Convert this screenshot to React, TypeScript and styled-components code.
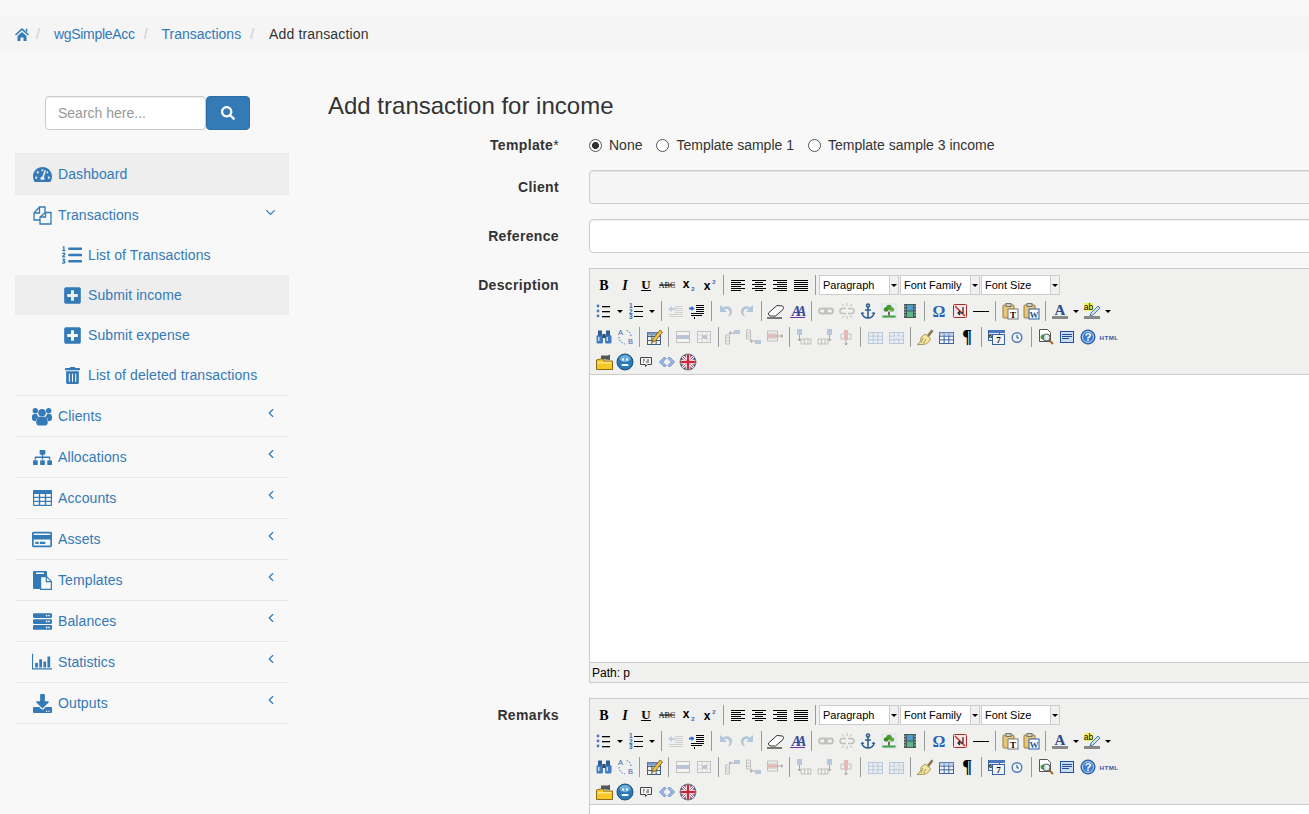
import React from "react";
import styled, { createGlobalStyle } from "styled-components";
import { FaSearch, FaTachometerAlt, FaListOl, FaPlusSquare, FaTrashAlt, FaSitemap, FaRegCreditCard, FaServer, FaDownload } from "react-icons/fa";
import { ChevronLeft, ChevronDown } from "lucide-react";

const Global = createGlobalStyle`
  html, body { margin: 0; height: 100%; overflow: hidden; background: #f8f8f8; }
  body { font-family: "Liberation Sans", Arial, sans-serif; font-size: 14px; line-height: 20px; color: #333; }
  * { box-sizing: border-box; }
`;

const Page = styled.div`
  width: 1309px;
  height: 814px;
  overflow: hidden;
  padding-top: 16px;
`;
const Crumbs = styled.nav`
  display: flex;
  align-items: center;
  height: 36px;
  padding: 0 15px;
  background: #f5f5f5;
`;
const Crumb = styled.span`
  color: #337ab7;
  display: inline-flex;
  align-items: center;
`;
const AppCrumb = styled(Crumb)`
  letter-spacing: -0.3px;
`;
const CrumbCurrent = styled.span`
  color: #333;
  letter-spacing: 0.15px;
  margin-left: 1px;
`;
const CrumbSep = styled.span`
  color: #ccc;
  padding: 0 14px 0 9px;
`;
const HomeSep = styled(CrumbSep)`
  padding-left: 7px;
`;
const Columns = styled.div`
  display: flex;
  align-items: flex-start;
`;
const Side = styled.aside`
  flex: none;
  width: 274px;
  margin: 44px 39px 0 15px;
`;
const SearchBar = styled.form`
  display: flex;
  margin: 0 0 23px 30px;
  height: 34px;
`;
const SearchInput = styled.input`
  width: 161px;
  height: 34px;
  padding: 6px 12px;
  border: 1px solid #ccc;
  border-radius: 4px;
  background: #fff;
  font: 14px "Liberation Sans", Arial, sans-serif;
  color: #555;
  box-shadow: inset 0 1px 1px rgba(0, 0, 0, 0.075);
  &::placeholder { color: #999; opacity: 1; }
`;
const SearchButton = styled.button`
  width: 44px;
  height: 34px;
  padding: 0;
  border: 1px solid #2e6da4;
  border-radius: 4px;
  background: #337ab7;
  color: #fff;
  font-size: 14px;
  display: flex;
  align-items: center;
  justify-content: center;
`;
const Menu = styled.ul`
  list-style: none;
  margin: 0;
  padding: 0;
  border-top: 1px solid #e7e7e7;
`;
const MenuItem = styled.li`
  border-bottom: 1px solid #e7e7e7;
`;
const MenuLink = styled.a<{ $active?: boolean; $sub?: boolean }>`
  display: flex;
  align-items: center;
  height: 40px;
  padding-left: ${(p) => (p.$sub ? "47px" : "17px")};
  padding-right: 11px;
  color: #337ab7;
  letter-spacing: 0.1px;
  background: ${(p) => (p.$active ? "#eee" : "transparent")};
`;
const MenuIcon = styled.span`
  flex: none;
  width: 20px;
  margin-right: 6px;
  display: flex;
  justify-content: center;
  align-items: center;
  font-size: 19px;
`;
const Caret = styled.span`
  margin-left: auto;
  display: flex;
  transform: translateY(-3px);
`;

const Main = styled.main`
  flex: none;
  width: 1200px;
  padding-top: 41px;
`;
const Title = styled.h3`
  margin: 0 0 15.6px;
  font-size: 24px;
  font-weight: 500;
  line-height: 26.4px;
  color: #333;
`;
const FormRow = styled.div`
  display: grid;
  grid-template-columns: 231px 1fr;
  column-gap: 30px;
  margin-bottom: 15px;
`;
const Label = styled.label<{ $flat?: boolean }>`
  text-align: right;
  font-weight: 700;
  letter-spacing: 0.35px;
  padding-top: ${(p) => (p.$flat ? "0" : "7px")};
`;
const Star = styled.span`
  font-weight: 400;
`;
const RadioGroup = styled.div`
  display: flex;
  height: 20px;
  align-items: center;
`;
const RadioLabel = styled.label`
  display: inline-flex;
  align-items: center;
  margin-right: 14px;
`;
const Radio = styled.input`
  appearance: none;
  width: 13px;
  height: 13px;
  margin: 0 7px 0 0;
  border: 1px solid #555;
  border-radius: 50%;
  background: #fff;
  &:checked { background: radial-gradient(circle, #333 0 3.2px, #fff 3.8px); }
`;
const TextInput = styled.input`
  width: 100%;
  height: 34px;
  padding: 6px 12px;
  border: 1px solid #ccc;
  border-radius: 4px;
  background: ${(p) => (p.disabled ? "#f5f5f5" : "#fff")};
  box-shadow: inset 0 1px 1px rgba(0, 0, 0, 0.075);
`;
const Editor = styled.div`
  border: 1px solid #ccc;
  background: #f0f0ee;
  font-family: "Liberation Sans", Arial, sans-serif;
`;
const Toolbar = styled.div`
  height: 106px;
  padding: 3px 0 0 3px;
  border-bottom: 1px solid #ccc;
`;
const ToolRow = styled.div`
  display: flex;
  align-items: center;
  height: 26px;
  &:last-child { height: 24px; }
`;
const Tool = styled.span<{ $off?: boolean }>`
  flex: none;
  width: 21px;
  height: 20px;
  display: flex;
  align-items: center;
  justify-content: center;
  opacity: ${(p) => (p.$off ? 0.3 : 1)};
`;
const Arrow = styled.span`
  flex: none;
  width: 11px;
  height: 20px;
  display: flex;
  align-items: center;
  justify-content: center;
  &::after {
    content: "";
    border-left: 3px solid transparent;
    border-right: 3px solid transparent;
    border-top: 3px solid #000;
  }
`;
const Sep = styled.span`
  flex: none;
  width: 8px;
  height: 20px;
  display: flex;
  justify-content: center;
  &::after { content: ""; width: 1px; background: #999; }
`;
const ListBox = styled.span<{ $w: number }>`
  flex: none;
  display: flex;
  width: ${(p) => p.$w}px;
  height: 20px;
  margin-right: 1px;
`;
const ListText = styled.span`
  flex: 1;
  background: #fff;
  border: 1px solid #ccc;
  border-right: 0;
  padding-left: 3px;
  font-size: 11px;
  line-height: 19px;
  color: #000;
  overflow: hidden;
  white-space: nowrap;
`;
const ListOpen = styled(Arrow)`
  width: 10px;
  background: #f0f0ee;
  border: 1px solid #ccc;
`;
const EditArea = styled.div`
  height: 288px;
  background: #fff;
  border-bottom: 1px solid #ccc;
`;
const StatusBar = styled.div`
  height: 19px;
  padding-left: 2px;
  font-size: 12px;
  line-height: 20px;
  color: #000;
`;

const lines = (rows: [number, number][], y0: number, color = "#000", step = 2) =>
  rows.map(([a, b], i) => <rect key={i} x={a} y={y0 + i * step} width={b - a} height={1} fill={color} />);

const serif = "Liberation Serif, serif";
const sans = "Liberation Sans, sans-serif";

const disc = (cx: number, cy: number, fill = "#4a78c0") => <circle cx={cx} cy={cy} r={1.4} fill={fill} />;
const grid = (x: number, y: number, w: number, h: number, c = "#4f7cb5", fill = "#e6eef8") => (
  <>
    <rect x={x + 0.5} y={y + 0.5} width={w} height={h} fill={fill} stroke={c} />
    <path d={`M${x} ${y + h / 3 + 0.5}h${w}M${x} ${y + (2 * h) / 3 + 0.5}h${w}M${x + w / 3 + 0.5} ${y}v${h}M${x + (2 * w) / 3 + 0.5} ${y}v${h}`} stroke={c} />
  </>
);

const icons: Record<string, React.ReactNode> = {
  bold: <text x="10" y="14.5" textAnchor="middle" fontFamily={serif} fontWeight="700" fontSize="14">B</text>,
  italic: <text x="10" y="14.5" textAnchor="middle" fontFamily={serif} fontWeight="700" fontStyle="italic" fontSize="14">I</text>,
  underline: (
    <>
      <text x="10" y="13.5" textAnchor="middle" fontFamily={serif} fontWeight="700" fontSize="13">U</text>
      <rect x="5" y="15" width="10" height="1" />
    </>
  ),
  strike: (
    <>
      <text x="10" y="13" textAnchor="middle" fontFamily={serif} fontSize="8">ABC</text>
      <rect x="2" y="9.5" width="16" height="1" />
    </>
  ),
  sub: (
    <>
      <text x="8" y="13" textAnchor="middle" fontFamily={sans} fontWeight="700" fontSize="12">x</text>
      <text x="15" y="16" textAnchor="middle" fontFamily={sans} fontWeight="700" fontSize="6" fill="#3a66b0">2</text>
    </>
  ),
  sup: (
    <>
      <text x="8" y="15" textAnchor="middle" fontFamily={sans} fontWeight="700" fontSize="12">x</text>
      <text x="15" y="9" textAnchor="middle" fontFamily={sans} fontWeight="700" fontSize="6" fill="#3a66b0">2</text>
    </>
  ),
  alLeft: lines([[3, 17], [3, 13], [3, 17], [3, 13], [3, 17], [3, 13]], 5),
  alCenter: lines([[3, 17], [6, 14], [3, 17], [6, 14], [3, 17], [6, 14]], 5),
  alRight: lines([[3, 17], [7, 17], [3, 17], [7, 17], [3, 17], [7, 17]], 5),
  alFull: lines([[3, 17], [3, 17], [3, 17], [3, 17], [3, 17], [3, 17]], 5),
  bullets: (
    <>
      {disc(4, 5)}{disc(4, 10)}{disc(4, 15)}
      {lines([[8, 16], [8, 16], [8, 16]], 5, "#000", 5)}
      {lines([[8, 16], [8, 16], [8, 16]], 6, "#aaa", 5)}
    </>
  ),
  numbers: (
    <>
      <text x="3" y="7" fontFamily={sans} fontWeight="700" fontSize="6.5" fill="#3a66b0">1</text>
      <text x="3" y="12.5" fontFamily={sans} fontWeight="700" fontSize="6.5" fill="#3a66b0">2</text>
      <text x="3" y="18" fontFamily={sans} fontWeight="700" fontSize="6.5" fill="#3a66b0">3</text>
      {lines([[8, 17], [8, 17], [8, 17]], 5, "#000", 5)}
    </>
  ),
  outdent: (
    <>
      {lines([[9, 17], [9, 17], [9, 17], [9, 17]], 5, "#888", 2)}
      {lines([[3, 17], [3, 17]], 13, "#888", 2)}
      <path d="M2 8l4-3v2h3v2H6v2z" fill="#4a8ad0" />
    </>
  ),
  indent: (
    <>
      {lines([[9, 17], [9, 17], [9, 17], [9, 17]], 4, "#000", 2)}
      {lines([[4, 17], [4, 15]], 12, "#000", 2)}
      <rect x="7" y="16" width="1" height="2" fill="#000" />
      <path d="M7.500 7.500L4.500 5v1.500H2v2h2.500V10z" fill="#2a6ad0" />
    </>
  ),
  undo: <path d="M4 4v7h7l-2.5-2.5C10 7 13 8 13.5 11c.3 2-.5 3.5-2 4.500 3.500-.5 5-3.500 4.500-6C15.300 5.800 11 3.800 7 6.500z" fill="#2a6ab0" />,
  redo: <path d="M16 4v7H9l2.500-2.500C10 7 7 8 6.500 11c-.3 2 .5 3.500 2 4.500-3.500-.5-5-3.500-4.500-6C4.700 5.800 9 3.800 13 6.500z" fill="#2a6ab0" />,
  eraser: (
    <>
      <path d="M2.500 12L11 4.500l5.500.5c1.200 1 1.200 2.500.5 3.500L9.500 15H5.500c-2.500 0-3.500-1.500-3-3z" fill="#fff" stroke="#333" />
      <path d="M1 17h15" stroke="#000" />
    </>
  ),
  removeFormat: (
    <>
      <text x="10" y="15" textAnchor="middle" fontFamily={serif} fontWeight="700" fontStyle="italic" fontSize="14" letterSpacing="-4" fill="#3a4a98">AA</text>
      <rect x="3" y="16" width="15" height="1" fill="#7030a0" />
    </>
  ),
  link: (
    <g fill="none" stroke="#555" strokeWidth="1.800">
      <rect x="3" y="7.500" width="8" height="5" rx="2.500" />
      <rect x="9" y="7.500" width="8" height="5" rx="2.500" />
    </g>
  ),
  unlink: (
    <g fill="none" stroke="#555" strokeWidth="1.500">
      <path d="M9 7.500H5.500a2.500 2.500 0 000 5H9M11 7.500h3.500a2.500 2.500 0 010 5H11" />
      <path d="M10 2v3M10 15v3M5 3l2 2.500M15 3l-2 2.500M5 17l2-2.500M15 17l-2-2.500" strokeWidth="1" />
    </g>
  ),
  anchor: (
    <g fill="none" stroke="#2f5f90" strokeWidth="1.600">
      <circle cx="10" cy="4.500" r="1.500" />
      <path d="M10 6v11M7 9h6M4 12c0 3 3 5 6 5s6-2 6-5" />
      <path d="M3 13l1.500-2 1.500 2M14 13l1.500-2 1.500 2" strokeWidth="1" />
    </g>
  ),
  image: (
    <>
      <rect x="3" y="3" width="14" height="14" fill="#e8f4fc" stroke="#ddd" />
      <rect x="3.500" y="14.500" width="13" height="2" fill="#3aa03a" />
      <rect x="9.200" y="10.500" width="1.600" height="4" fill="#704020" />
      <circle cx="10" cy="6.500" r="2.800" fill="#4f9a30" />
      <circle cx="7" cy="8.500" r="2.300" fill="#3f8a2a" />
      <circle cx="13" cy="8.500" r="2.300" fill="#6aa838" />
    </>
  ),
  media: (
    <>
      <rect x="4" y="3" width="12" height="14" fill="#4a5a58" />
      <rect x="7" y="4" width="6" height="5.500" fill="#4aa0c8" />
      <rect x="7" y="10.500" width="6" height="5.500" fill="#58b888" />
      <path d="M5 4.500v11M15 4.500v11" stroke="#cfcfcf" strokeDasharray="1.500 1.500" />
    </>
  ),
  omega: <text x="10" y="15.500" textAnchor="middle" fontFamily={serif} fontWeight="700" fontSize="16" fill="#2a62b0">Ω</text>,
  nonbreak: (
    <>
      <rect x="3.500" y="3.500" width="13" height="13" rx="1" fill="#f8e8e8" stroke="#b02828" />
      <path d="M5 5l10 10" stroke="#c83030" strokeWidth="1.500" />
      <path d="M13 6v6H8M10 10l-2 2 2 2" fill="none" stroke="#222" strokeWidth="1.200" />
    </>
  ),
  hr: <rect x="2" y="10" width="16" height="1" fill="#000" />,
  pasteText: (
    <>
      <rect x="3" y="4" width="11" height="13" rx="1" fill="#e6c878" stroke="#9a7a38" />
      <rect x="6" y="2.500" width="5" height="3" fill="#ccc" stroke="#777" />
      <rect x="8" y="8" width="10" height="10" fill="#fff" stroke="#777" />
      <text x="13" y="16.500" textAnchor="middle" fontFamily={serif} fontWeight="700" fontSize="9">T</text>
    </>
  ),
  pasteWord: (
    <>
      <rect x="3" y="4" width="11" height="13" rx="1" fill="#e6c878" stroke="#9a7a38" />
      <rect x="6" y="2.500" width="5" height="3" fill="#ccc" stroke="#777" />
      <rect x="8" y="8" width="10" height="10" fill="#fff" stroke="#2a5aa0" />
      <text x="13" y="16.500" textAnchor="middle" fontFamily={serif} fontWeight="700" fontSize="9" fill="#2a5aa0">W</text>
    </>
  ),
  fore: (
    <>
      <text x="10" y="14" textAnchor="middle" fontFamily={serif} fontWeight="700" fontSize="15" fill="#2a4a88">A</text>
      <rect x="2" y="15" width="16" height="3" fill="#888" />
    </>
  ),
  back: (
    <>
      <rect x="2" y="2" width="9" height="8" fill="#f4f060" />
      <text x="6.500" y="9" textAnchor="middle" fontFamily={sans} fontSize="8.500">ab</text>
      <path d="M9 12l7-7 2 2-7 7-3 1z" fill="#cfe0f0" stroke="#4a78a8" />
      <rect x="2" y="15" width="16" height="3" fill="#888" />
    </>
  ),
  search: (
    <>
      <rect x="2.500" y="8" width="6.500" height="8.500" rx="1.500" fill="#3f7cc0" />
      <rect x="11" y="8" width="6.500" height="8.500" rx="1.500" fill="#3f7cc0" />
      <rect x="4" y="3.500" width="4" height="5" fill="#2f5f90" />
      <rect x="12" y="3.500" width="4" height="5" fill="#2f5f90" />
      <rect x="8.500" y="7" width="3" height="4" fill="#264a70" />
      <rect x="4" y="10" width="1.500" height="4" fill="#c4dcf0" />
      <rect x="12.500" y="10" width="1.500" height="4" fill="#c4dcf0" />
    </>
  ),
  replace: (
    <>
      <text x="3" y="8" fontFamily={sans} fontSize="7.500" fill="#3a66b0">A</text>
      <text x="13" y="17" fontFamily={sans} fontSize="7.500" fill="#3a66b0">B</text>
      <path d="M4 10c0 3 2 6 6 7M16 9c0-3-2-5-6-6" fill="none" stroke="#3a7ad0" strokeDasharray="1.500 1.500" />
    </>
  ),
  tableEdit: (
    <>
      {grid(3, 5, 13, 12, "#3f5f88", "#f4f0e0")}
      <rect x="3.500" y="5.500" width="13" height="3" fill="#7a9cc8" />
      <path d="M9 12l7-9 2.500 2-7 9-3 1z" fill="#f0c040" stroke="#805020" strokeWidth=".8" />
    </>
  ),
  rowProps: (
    <>
      <rect x="3.500" y="4.500" width="13" height="11" fill="#fff" stroke="#555" />
      <rect x="4" y="8" width="12" height="4" fill="#3a66a0" />
    </>
  ),
  cellProps: (
    <>
      <rect x="3.500" y="4.500" width="13" height="11" fill="#fff" stroke="#555" />
      <rect x="8" y="8" width="5" height="4" fill="#3a66a0" />
      <path d="M4 8h12M4 12h12M8 5v10M13 5v10" stroke="#999" />
    </>
  ),
  rowBefore: (
    <>
      <path d="M2.500 8h4v9h-4zM2.500 11h4M2.500 14h4" fill="none" stroke="#555" />
      <rect x="11" y="3" width="6" height="4" fill="#3a6ab0" />
      <path d="M6 6h5M6 6l2-1.500M6 6l2 1.500" stroke="#000" fill="none" />
    </>
  ),
  rowAfter: (
    <>
      <path d="M2.500 3h4v9h-4zM2.500 6h4M2.500 9h4" fill="none" stroke="#555" />
      <rect x="11" y="13" width="6" height="4" fill="#3a6ab0" />
      <path d="M6 14h5M6 14l2-1.500M6 14l2 1.500" stroke="#000" fill="none" />
    </>
  ),
  rowDel: (
    <>
      <path d="M2.500 4h10v10h-10zM2.500 7h10M2.500 11h10" fill="none" stroke="#555" />
      <rect x="3" y="7.500" width="9" height="3" fill="#c84040" />
      <path d="M12 9h6l-2-1.500M18 9l-2 1.500" stroke="#000" fill="none" />
    </>
  ),
  colBefore: (
    <>
      <path d="M7 12h10v5H7zM10.500 12v5M14 12v5" fill="none" stroke="#555" />
      <rect x="3" y="2" width="5" height="6" fill="#3a6ab0" />
      <path d="M5.500 8v6M4 12l1.500 2 1.500-2" stroke="#000" fill="none" />
    </>
  ),
  colAfter: (
    <>
      <path d="M3 12h10v5H3zM6.500 12v5M10 12v5" fill="none" stroke="#555" />
      <rect x="12" y="2" width="5" height="6" fill="#3a6ab0" />
      <path d="M14.500 8v6M13 12l1.500 2 1.500-2" stroke="#000" fill="none" />
    </>
  ),
  colDel: (
    <>
      <path d="M5 7h10v5H5z" fill="none" stroke="#555" />
      <rect x="8" y="3" width="4" height="10" fill="#c84040" />
      <path d="M10 13v5M8.500 16l1.500 2 1.500-2" stroke="#000" fill="none" />
    </>
  ),
  split: <>{grid(3, 5, 14, 11, "#3a6ab0")}</>,
  merge: (
    <>
      {grid(3, 5, 14, 11, "#3a6ab0")}
      <rect x="8" y="9" width="8" height="3" fill="#bcd0e8" />
    </>
  ),
  cleanup: (
    <>
      <path d="M12 8l4.500-5.500 2 1.500-4.500 6z" fill="#8a7a58" />
      <path d="M10 7l5.500 4.500c-1 3.500-4 6-8 6H2c3-1.500 4-4 4-7z" fill="#f4e8a0" stroke="#a8965a" />
      <path d="M8 11l-2 5M11 12l-2.500 4.500" stroke="#a8965a" />
    </>
  ),
  visual: <>{grid(3, 5, 14, 11, "#3a62a0", "#f6f8fc")}<rect x="3.500" y="5.500" width="14" height="3" fill="#a8c0dc" opacity=".7" /></>,
  pilcrow: <text x="10" y="16" textAnchor="middle" fontFamily={serif} fontWeight="700" fontSize="18">¶</text>,
  date: (
    <>
      <rect x="2.500" y="3.500" width="11" height="10" fill="#dfe8f4" stroke="#3a62a0" />
      <rect x="3" y="3" width="16" height="3" fill="#4a78c0" />
      <rect x="6.500" y="7.500" width="12" height="10" fill="#f2f2f2" stroke="#3a62a0" />
      <text x="12.500" y="16" textAnchor="middle" fontFamily={serif} fontWeight="700" fontSize="9">7</text>
      <text x="4.500" y="11" textAnchor="middle" fontFamily={sans} fontWeight="700" fontSize="6">6</text>
    </>
  ),
  clock: (
    <>
      <circle cx="10" cy="10.500" r="4.800" fill="#eef4fb" stroke="#4f7cb4" strokeWidth="1.400" />
      <path d="M10 8v3h2" fill="none" stroke="#254a78" />
    </>
  ),
  preview: (
    <>
      <path d="M3.500 2.500h8l3 3v9h-11z" fill="#fff" stroke="#555" />
      <circle cx="7" cy="10" r="2.500" fill="#50a050" />
      <circle cx="10.500" cy="10.500" r="3.500" fill="#dceaf6" fillOpacity=".7" stroke="#555" />
      <path d="M13 13l4 4" stroke="#a06a20" strokeWidth="2" />
    </>
  ),
  fullscreen: (
    <>
      <rect x="3.500" y="4.500" width="13" height="11" fill="#c8dcf4" stroke="#254f90" />
      <path d="M5 7.500h10M5 9.500h10M5 11.500h7" stroke="#254f90" />
    </>
  ),
  help: (
    <>
      <circle cx="10" cy="10" r="7" fill="#3a7cd0" stroke="#1f4f90" />
      <circle cx="10" cy="10" r="5.500" fill="none" stroke="#b8d4f4" />
      <text x="10" y="14" textAnchor="middle" fontFamily={sans} fontWeight="700" fontSize="11" fill="#fff">?</text>
    </>
  ),
  html: <text x="10" y="12.500" textAnchor="middle" fontFamily={sans} fontWeight="700" fontSize="6.200" letterSpacing=".4" fill="#2f5aa8">HTML</text>,
  folder: (
    <>
      <path d="M7 7V3.500h7l2-1V8z" fill="#555" />
      <path d="M2.500 8l4-1h2.500l1 2h8.500v8.500h-16z" fill="#f6c828" stroke="#8a6a18" />
      <rect x="3.500" y="10" width="14" height="1.500" fill="#fbe68a" />
    </>
  ),
  emotion: (
    <>
      <circle cx="10" cy="10" r="8" fill="#2a7ab8" stroke="#1c4f78" />
      <ellipse cx="10" cy="6.500" rx="5.500" ry="3.500" fill="#7abce4" opacity=".8" />
      <rect x="7" y="6.500" width="2" height="2" fill="#fff" />
      <rect x="11" y="6.500" width="2" height="2" fill="#fff" />
      <rect x="6.500" y="12" width="7" height="2" rx="1" fill="#fff" />
    </>
  ),
  comment: (
    <>
      <path d="M4.500 5.500h11v7h-4l-2 2v-2h-5z" fill="#f4f4f4" stroke="#444" />
      <path d="M7 8h2M7 10h1M10 10h3M11 8h2" stroke="#444" />
    </>
  ),
  code: (
    <>
      <path d="M7.500 5L2.500 10l5 5 1.500-1.500L5.500 10l3.500-3.500z" fill="#a8c0ec" stroke="#4a70c0" strokeWidth=".8" />
      <path d="M12.500 5l5 5-5 5-1.500-1.500 3.500-3.500L11 6.500z" fill="#a8c0ec" stroke="#4a70c0" strokeWidth=".8" />
    </>
  ),
  flag: (
    <>
      <defs>
        <clipPath id="ukc"><circle cx="10" cy="10" r="8" /></clipPath>
      </defs>
      <g clipPath="url(#ukc)">
        <rect width="20" height="20" fill="#39458c" />
        <path d="M2 2l16 16M18 2L2 18" stroke="#fff" strokeWidth="3" />
        <path d="M2 2l16 16M18 2L2 18" stroke="#c8283c" strokeWidth="1" />
        <path d="M10 0v20M0 10h20" stroke="#fff" strokeWidth="4.500" />
        <path d="M10 0v20M0 10h20" stroke="#c8283c" strokeWidth="2.500" />
      </g>
      <circle cx="10" cy="10" r="8" fill="none" stroke="#777" />
    </>
  ),
};

type Item = string;
const off = new Set(["outdent", "undo", "redo", "link", "unlink", "rowProps", "cellProps", "rowBefore", "rowAfter", "rowDel", "colBefore", "colAfter", "colDel", "split", "merge"]);

const row1: Item[] = ["bold", "italic", "underline", "strike", "sub", "sup", "|", "alLeft", "alCenter", "alRight", "alFull", "|"];
const row2: Item[] = ["bullets", ">", "numbers", ">", "|", "outdent", "indent", "|", "undo", "redo", "|", "eraser", "removeFormat", "|", "link", "unlink", "anchor", "image", "media", "|", "omega", "nonbreak", "hr", "|", "pasteText", "pasteWord", "|", "fore", ">", "back", ">"];
const row3: Item[] = ["search", "replace", "|", "tableEdit", "|", "rowProps", "cellProps", "|", "rowBefore", "rowAfter", "rowDel", "|", "colBefore", "colAfter", "colDel", "|", "split", "merge", "|", "cleanup", "visual", "pilcrow", "|", "date", "clock", "|", "preview", "fullscreen", "help", "html"];
const row4: Item[] = ["folder", "emotion", "comment", "code", "flag"];

function Items({ list }: { list: Item[] }) {
  return (
    <>
      {list.map((it, i) =>
        it === "|" ? (
          <Sep key={i} />
        ) : it === ">" ? (
          <Arrow key={i} />
        ) : (
          <Tool key={i} $off={off.has(it)}>
            <svg width="20" height="20" viewBox="0 0 20 20">{icons[it]}</svg>
          </Tool>
        )
      )}
    </>
  );
}

function RichEditor({ path }: { path?: string }) {
  return (
    <Editor>
      <Toolbar>
        <ToolRow>
          <Items list={row1} />
          <ListBox $w={80}><ListText>Paragraph</ListText><ListOpen /></ListBox>
          <ListBox $w={80}><ListText>Font Family</ListText><ListOpen /></ListBox>
          <ListBox $w={79}><ListText>Font Size</ListText><ListOpen /></ListBox>
        </ToolRow>
        <ToolRow><Items list={row2} /></ToolRow>
        <ToolRow><Items list={row3} /></ToolRow>
        <ToolRow><Items list={row4} /></ToolRow>
      </Toolbar>
      <EditArea />
      <StatusBar>{path}</StatusBar>
    </Editor>
  );
}

const blue = "#337ab7";
const bg = "#f8f8f8";

const HomeIcon = () => (
  <svg width="14" height="13" viewBox="0 0 14 13" fill={blue}>
    <path d="M7 0l7 6.500-1 1L7 2.200 1 7.500l-1-1z" />
    <path d="M10.800 .8h1.500v3.700l-1.500-1.400z" />
    <path d="M2.500 8L7 4l4.500 4v5H8.500V9.500h-3V13h-3z" />
  </svg>
);
const CopyIcon = () => (
  <svg width="19" height="19" viewBox="0 0 19 19" fill="none" stroke={blue} strokeWidth="1.300">
    <path d="M7 14H1V7l5.500-6H12v5.500" />
    <path d="M6.500 1v6H1" />
    <path d="M12.500 6.500H18V18H7v-7z" fill={bg} />
    <path d="M12.500 6.500V11H7" />
  </svg>
);
const UsersIcon = () => (
  <svg width="21" height="19" viewBox="0 0 21 19" fill={blue}>
    <circle cx="3.500" cy="3.500" r="2.800" />
    <circle cx="17.500" cy="3.500" r="2.800" />
    <path d="M0 9.500C0 8 1 7 2.500 7H5c.7 1.500 1 2 2 3-2 1-3 2.500-3 4.500C1 14.500 0 13 0 11.500zM21 9.500C21 8 20 7 18.500 7H16c-.7 1.500-1 2-2 3 2 1 3 2.500 3 4.500 3 0 4-1.500 4-3z" />
    <circle cx="10.500" cy="5.500" r="4" />
    <path d="M4.500 14.500c0-3 1.800-4.800 3.500-4.800h5c1.700 0 3.500 1.800 3.500 4.800v1.500c0 1.800-1.300 3-3 3H7.500c-1.700 0-3-1.200-3-3z" />
  </svg>
);
const TableIcon = () => (
  <svg width="19" height="16" viewBox="0 0 19 16" fill={blue}>
    <rect width="19" height="16" rx="1" />
    {[4, 8, 12].map((y) =>
      [1.2, 7.2, 13.200].map((x) => <rect key={`${x}${y}`} x={x} y={y} width="4.600" height="2.800" fill={bg} />)
    )}
  </svg>
);
const TemplatesIcon = () => (
  <svg width="19" height="19" viewBox="0 0 19 19" fill={blue}>
    <rect width="14" height="18" rx="1" />
    <rect x="3" y="1.500" width="8" height="1.500" fill={bg} />
    <path d="M7.600 5.600h6l4.800 4.800v8H7.600z" fill={bg} stroke={blue} strokeWidth="1.200" />
    <path d="M13.300 5.600v5h5.100" fill="none" stroke={blue} strokeWidth="1.200" />
  </svg>
);
const StatsIcon = () => (
  <svg width="22" height="18" viewBox="0 0 22 18" fill={blue}>
    <path d="M0 0h1.200v16H22v1.300H0z" />
    <rect x="3.500" y="10" width="3" height="5" />
    <rect x="8" y="6" width="3" height="9" />
    <rect x="12.500" y="8.500" width="3" height="6.500" />
    <rect x="17" y="3" width="3" height="12" />
  </svg>
);

const groups: [React.ReactNode, string][] = [
  [<UsersIcon />, "Clients"],
  [<FaSitemap />, "Allocations"],
  [<TableIcon />, "Accounts"],
  [<FaRegCreditCard size={21} />, "Assets"],
  [<TemplatesIcon />, "Templates"],
  [<FaServer />, "Balances"],
  [<StatsIcon />, "Statistics"],
  [<FaDownload />, "Outputs"],
];
const subs: [React.ReactNode, string, boolean][] = [
  [<FaListOl size={20} />, "List of Transactions", false],
  [<FaPlusSquare />, "Submit income", true],
  [<FaPlusSquare />, "Submit expense", false],
  [<FaTrashAlt size={17} />, "List of deleted transactions", false],
];

export default function App() {
  return (
    <Page>
      <Global />
      <Crumbs>
        <Crumb><HomeIcon /></Crumb>
        <HomeSep>/</HomeSep>
        <AppCrumb>wgSimpleAcc</AppCrumb>
        <CrumbSep>/</CrumbSep>
        <Crumb>Transactions</Crumb>
        <CrumbSep>/</CrumbSep>
        <CrumbCurrent>Add transaction</CrumbCurrent>
      </Crumbs>
      <Columns>
        <Side>
          <SearchBar>
            <SearchInput placeholder="Search here..." />
            <SearchButton type="button"><FaSearch /></SearchButton>
          </SearchBar>
          <Menu>
            <MenuItem>
              <MenuLink $active><MenuIcon><FaTachometerAlt /></MenuIcon>Dashboard</MenuLink>
            </MenuItem>
            <MenuItem>
              <MenuLink>
                <MenuIcon><CopyIcon /></MenuIcon>Transactions
                <Caret><ChevronDown size={15} strokeWidth={2} /></Caret>
              </MenuLink>
              {subs.map(([icon, text, active]) => (
                <MenuLink key={text} $sub $active={active}>
                  <MenuIcon>{icon}</MenuIcon>{text}
                </MenuLink>
              ))}
            </MenuItem>
            {groups.map(([icon, text]) => (
              <MenuItem key={text}>
                <MenuLink>
                  <MenuIcon>{icon}</MenuIcon>{text}
                  <Caret><ChevronLeft size={14} strokeWidth={2} /></Caret>
                </MenuLink>
              </MenuItem>
            ))}
          </Menu>
        </Side>
        <Main>
          <Title>Add transaction for income</Title>
          <FormRow>
            <Label $flat>Template<Star>*</Star></Label>
            <RadioGroup>
              <RadioLabel><Radio type="radio" name="t" defaultChecked />None</RadioLabel>
              <RadioLabel><Radio type="radio" name="t" />Template sample 1</RadioLabel>
              <RadioLabel><Radio type="radio" name="t" />Template sample 3 income</RadioLabel>
            </RadioGroup>
          </FormRow>
          <FormRow>
            <Label>Client</Label>
            <TextInput disabled />
          </FormRow>
          <FormRow>
            <Label>Reference</Label>
            <TextInput />
          </FormRow>
          <FormRow>
            <Label>Description</Label>
            <RichEditor path="Path: p" />
          </FormRow>
          <FormRow>
            <Label>Remarks</Label>
            <RichEditor />
          </FormRow>
        </Main>
      </Columns>
    </Page>
  );
}
